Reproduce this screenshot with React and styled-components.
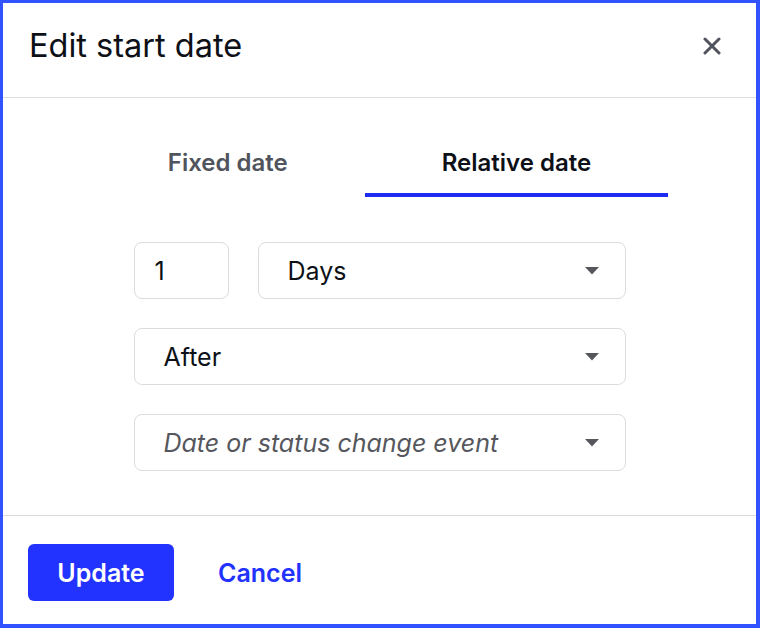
import React, { useState } from "react"
import styled, { createGlobalStyle } from "styled-components"

const GlobalStyle = createGlobalStyle`
  html, body {
    margin: 0;
    padding: 0;
    background: #ffffff;
  }
  body {
    font-family: Inter, "Noto Sans", sans-serif;
    color: #0d1117;
  }
  * {
    box-sizing: border-box;
  }
`

const CloseIcon = () => (
  <svg width="18" height="18" viewBox="0 0 18 18" fill="none">
    <path d="M2 2L16 16M16 2L2 16" stroke="#50545c" strokeWidth="3" strokeLinecap="round" />
  </svg>
)

const Caret = () => (
  <svg width="14" height="8" viewBox="0 0 14 8">
    <path d="M0 0H14L7 7.5Z" fill="#55575d" />
  </svg>
)

const App = () => {
  const [tab, setTab] = useState("relative")

  return (
    <>
      <GlobalStyle />
      <Frame>
        <Header>
          <Title>Edit start date</Title>
          <CloseButton aria-label="Close">
            <CloseIcon />
          </CloseButton>
        </Header>
        <Body>
          <Tabs>
            <Tab active={tab === "fixed"} onClick={() => setTab("fixed")}>Fixed date</Tab>
            <Tab active={tab === "relative"} onClick={() => setTab("relative")}>Relative date</Tab>
          </Tabs>
          <Form>
            <Row>
              <NumberField>1</NumberField>
              <Select grow>
                <Value>Days</Value>
                <Caret />
              </Select>
            </Row>
            <Select>
              <Value>After</Value>
              <Caret />
            </Select>
            <Select>
              <Value placeholder>Date or status change event</Value>
              <Caret />
            </Select>
          </Form>
        </Body>
        <Footer>
          <PrimaryButton>Update</PrimaryButton>
          <LinkButton>Cancel</LinkButton>
        </Footer>
      </Frame>
    </>
  )
}
export default App

const Frame = styled.div`
  width: 760px;
  height: 628px;
  border-style: solid;
  border-color: #3352ff;
  border-width: 3px 4px 4px 3px;
  display: flex;
  flex-direction: column;
  background: #fff;
`
const Header = styled.div`
  height: 95px;
  flex-shrink: 0;
  display: flex;
  align-items: center;
  justify-content: space-between;
  padding: 0 35px 8px 26px;
  border-bottom: 1px solid #dcdcdc;
`
const Title = styled.h1`
  margin: 0;
  font-size: 32.5px;
  line-height: 40px;
  font-weight: 400;
  color: #0d1117;
`
const CloseButton = styled.button`
  border: none;
  background: none;
  padding: 0;
  width: 18px;
  height: 18px;
  display: flex;
  cursor: pointer;
`
const Body = styled.div`
  flex: 1;
  display: flex;
  flex-direction: column;
  align-items: center;
  padding-top: 51px;
`
const Tabs = styled.div`
  display: flex;
`
const Tab = styled.button`
  border: none;
  background: none;
  font-family: Inter, "Noto Sans", sans-serif;
  font-size: 24px;
  line-height: 28px;
  font-weight: 600;
  padding: 0 77px 16px;
  color: ${p => (p.active ? "#0d1117" : "#50545c")};
  border-bottom: 4px solid ${p => (p.active ? "#1f2bf0" : "transparent")};
  cursor: pointer;
`
const Form = styled.div`
  width: 492px;
  margin-top: 45px;
  display: flex;
  flex-direction: column;
  gap: 29px;
`
const Row = styled.div`
  display: flex;
  gap: 29px;
`
const NumberField = styled.div`
  width: 95px;
  height: 57px;
  flex-shrink: 0;
  border: 1px solid #dcdcdc;
  border-radius: 8px;
  padding: 0 20px;
  display: flex;
  align-items: center;
  font-size: 25px;
  color: #0d1117;
`
const Select = styled.div`
  flex: ${p => (p.grow ? "1" : "0 0 auto")};
  height: 57px;
  border: 1px solid #dcdcdc;
  border-radius: 8px;
  padding: 0 26px 0 29px;
  display: flex;
  align-items: center;
  justify-content: space-between;
`
const Value = styled.span`
  font-size: 25px;
  color: ${p => (p.placeholder ? "#55575d" : "#0d1117")};
  font-style: ${p => (p.placeholder ? "italic" : "normal")};
`
const Footer = styled.div`
  height: 109px;
  flex-shrink: 0;
  border-top: 1px solid #dcdcdc;
  display: flex;
  align-items: flex-start;
  padding: 28px 25px 0;
  gap: 44px;
`
const PrimaryButton = styled.button`
  height: 57px;
  width: 146px;
  border: none;
  border-radius: 6px;
  background: #2232ff;
  color: #fff;
  font-family: Inter, "Noto Sans", sans-serif;
  font-size: 25px;
  font-weight: 600;
  cursor: pointer;
`
const LinkButton = styled.button`
  height: 57px;
  border: none;
  background: none;
  padding: 0;
  color: #2232ff;
  font-family: Inter, "Noto Sans", sans-serif;
  font-size: 25px;
  font-weight: 600;
  cursor: pointer;
`
